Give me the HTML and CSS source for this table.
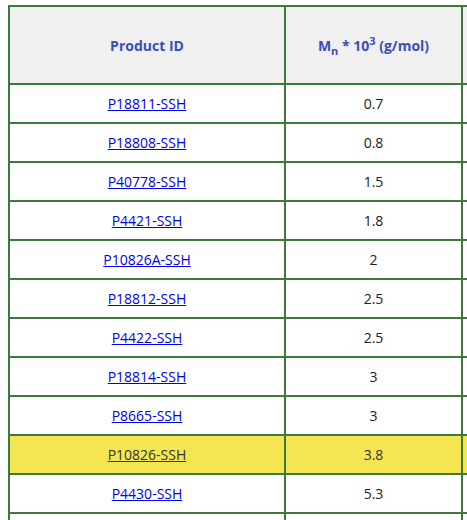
FILE: index.html
```html
<!DOCTYPE html>
<html>
<head>
<meta charset="utf-8">
<link rel="stylesheet" href="styles.css">
</head>
<body>
<div class="wrap">
<table class="products">
  <thead>
    <tr>
      <th class="c1">Product ID</th>
      <th class="c2">M<sub>n</sub> * 10<sup>3</sup> (g/mol)</th>
      <th class="c3"></th>
    </tr>
  </thead>
  <tbody>
    <tr><td><a href="#">P18811-SSH</a></td><td>0.7</td><td></td></tr>
    <tr><td><a href="#">P18808-SSH</a></td><td>0.8</td><td></td></tr>
    <tr><td><a href="#">P40778-SSH</a></td><td>1.5</td><td></td></tr>
    <tr><td><a href="#">P4421-SSH</a></td><td>1.8</td><td></td></tr>
    <tr><td><a href="#">P10826A-SSH</a></td><td>2</td><td></td></tr>
    <tr><td><a href="#">P18812-SSH</a></td><td>2.5</td><td></td></tr>
    <tr><td><a href="#">P4422-SSH</a></td><td>2.5</td><td></td></tr>
    <tr><td><a href="#">P18814-SSH</a></td><td>3</td><td></td></tr>
    <tr><td><a href="#">P8665-SSH</a></td><td>3</td><td></td></tr>
    <tr class="hl"><td><a href="#">P10826-SSH</a></td><td>3.8</td><td></td></tr>
    <tr><td><a href="#">P4430-SSH</a></td><td>5.3</td><td></td></tr>
    <tr><td></td><td></td><td></td></tr>
  </tbody>
</table>
</div>
</body>
</html>
```
FILE: styles.css
```css
html, body {
  margin: 0;
  padding: 0;
  overflow: hidden;
  background: #fff;
}
.wrap {
  padding: 5px 0 0 8px;
}
.products {
  border-collapse: collapse;
  font-family: "Open Sans", "Liberation Sans", sans-serif;
  font-size: 14px;
  color: #222;
  table-layout: fixed;
  width: 695px;
}
.products th, .products td {
  border: 2px solid #3b7a3b;
  text-align: center;
  padding: 0;
}
.products th {
  background: #f0f0f0;
  color: #3a4fb8;
  font-weight: 700;
  height: 76px;
}
.products td {
  height: 37px;
}
.c1 { width: 274px; }
.c2 { width: 175px; }
.c3 { width: 240px; }
.products sub, .products sup {
  font-size: 11px;
  line-height: 0;
}
.products a {
  color: #0000ee;
  text-decoration: underline;
}
.products tr.hl td {
  background: #f5e651;
  color: #333;
}
.products tr.hl a {
  color: #333;
}
```
